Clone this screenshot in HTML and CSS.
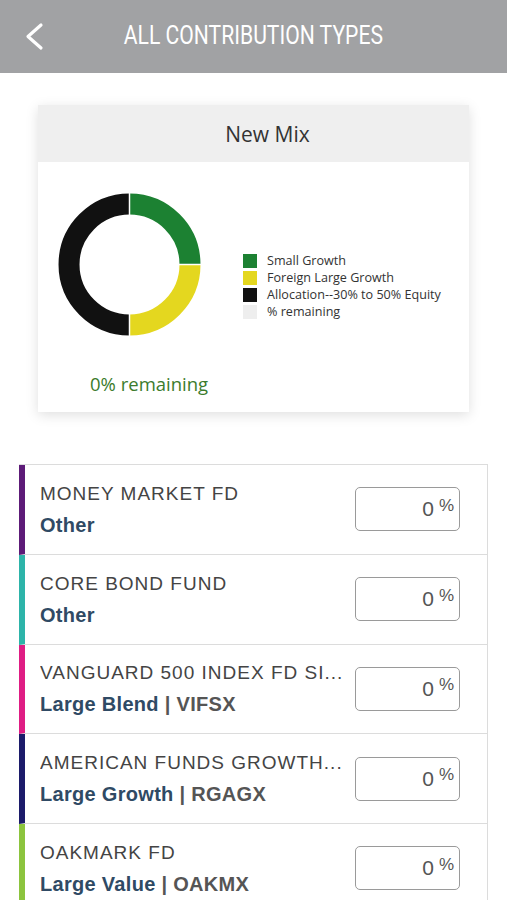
FILE: index.html
```html
<!DOCTYPE html>
<html lang="en">
<head>
    <meta charset="UTF-8">
    <meta name="viewport" content="width=device-width, initial-scale=1.0">
    <title>All Contribution Types</title>
    <link rel="stylesheet" href="styles.css">
</head>
<body>
    <header class="topbar">
        <div class="back">
            <svg width="20" height="30" viewBox="0 0 20 30">
                <polyline points="16,3 3,14.5 16,26" fill="none" stroke="#fff" stroke-width="3.2" stroke-linecap="round" stroke-linejoin="round"/>
            </svg>
        </div>
        <h1 class="title"><span>ALL CONTRIBUTION TYPES</span></h1>
        <div></div>
    </header>

    <section class="mix-card">
        <div class="mix-head">New Mix</div>
        <div class="mix-body">
            <div class="chart-row">
                <svg class="donut" width="143" height="143" viewBox="0 0 143 143">
                    <path d="M71.5 11 A60.5 60.5 0 0 1 132 71.5" fill="none" stroke="#1c8132" stroke-width="21"/>
                    <path d="M132 71.5 A60.5 60.5 0 0 1 71.5 132" fill="none" stroke="#e4d71f" stroke-width="21"/>
                    <path d="M71.5 132 A60.5 60.5 0 0 1 71.5 11" fill="none" stroke="#111111" stroke-width="21"/>
                    <line x1="71.5" y1="0" x2="71.5" y2="22" stroke="#fff" stroke-width="1.5"/>
                    <line x1="121" y1="71.5" x2="143" y2="71.5" stroke="#fff" stroke-width="1.5"/>
                    <line x1="71.5" y1="121" x2="71.5" y2="143" stroke="#fff" stroke-width="1.5"/>
                </svg>
                <ul class="legend">
                    <li><span class="swatch green"></span>Small Growth</li>
                    <li><span class="swatch yellow"></span>Foreign Large Growth</li>
                    <li><span class="swatch black"></span>Allocation--30% to 50% Equity</li>
                    <li><span class="swatch empty"></span>% remaining</li>
                </ul>
            </div>
            <div class="remaining">0% remaining</div>
        </div>
    </section>

    <div class="fund-list">
        <div class="fund purple">
            <div class="fund-info">
                <div class="fund-name">MONEY MARKET FD</div>
                <div class="fund-type">Other</div>
            </div>
            <div class="pct"><span class="num">0</span><span class="sign">%</span></div>
        </div>
        <div class="fund teal">
            <div class="fund-info">
                <div class="fund-name">CORE BOND FUND</div>
                <div class="fund-type">Other</div>
            </div>
            <div class="pct"><span class="num">0</span><span class="sign">%</span></div>
        </div>
        <div class="fund pink">
            <div class="fund-info">
                <div class="fund-name">VANGUARD 500 INDEX FD SI...</div>
                <div class="fund-type">Large Blend <span class="ticker">| VIFSX</span></div>
            </div>
            <div class="pct"><span class="num">0</span><span class="sign">%</span></div>
        </div>
        <div class="fund navy">
            <div class="fund-info">
                <div class="fund-name">AMERICAN FUNDS GROWTH...</div>
                <div class="fund-type">Large Growth <span class="ticker">| RGAGX</span></div>
            </div>
            <div class="pct"><span class="num">0</span><span class="sign">%</span></div>
        </div>
        <div class="fund lime">
            <div class="fund-info">
                <div class="fund-name">OAKMARK FD</div>
                <div class="fund-type">Large Value <span class="ticker">| OAKMX</span></div>
            </div>
            <div class="pct"><span class="num">0</span><span class="sign">%</span></div>
        </div>
    </div>
</body>
</html>
```

FILE: styles.css
```css
* {
    margin: 0;
    padding: 0;
    box-sizing: border-box;
}
body {
    width: 507px;
    background: #fff;
    font-family: "Liberation Sans", Arial, sans-serif;
    overflow: hidden;
}

.topbar {
    height: 73px;
    background: #a1a2a4;
    display: grid;
    grid-template-columns: 1fr auto 1fr;
    align-items: center;
}
.back {
    padding-left: 25px;
    display: flex;
    align-items: center;
}
.title {
    color: #fff;
    font-family: Roboto, sans-serif;
    font-weight: 400;
    font-size: 25px;
    margin-top: -2px;
}
.title span {
    display: inline-block;
    transform: scaleX(0.845);
}

.mix-card {
    margin: 32px 38px 0;
    background: #fff;
    box-shadow: 0 3px 12px rgba(0, 0, 0, 0.13);
}
.mix-head {
    height: 57px;
    background: #efefef;
    display: flex;
    align-items: center;
    justify-content: center;
    padding-left: 28px;
    font-family: "Open Sans", sans-serif;
    font-size: 21px;
    color: #333;
}
.mix-body {
    padding: 31px 0 16px 20px;
}
.chart-row {
    display: flex;
    align-items: center;
}
.legend {
    list-style: none;
    margin-left: 42px;
    margin-top: 43px;
    font-family: "Open Sans", sans-serif;
    font-size: 12.6px;
    color: #333;
}
.legend li {
    display: flex;
    align-items: center;
    height: 17px;
}
.swatch {
    width: 14px;
    height: 14px;
    margin-right: 10px;
}
.swatch.green { background: #1c8132; }
.swatch.yellow { background: #e4d71f; }
.swatch.black { background: #111; }
.swatch.empty { background: #eeeeee; }
.remaining {
    margin-top: 35px;
    padding-left: 32px;
    font-family: "Open Sans", sans-serif;
    font-size: 18.5px;
    color: #3b7b2c;
}

.fund-list {
    margin: 52px 19px 0;
    border-top: 1px solid #dcdcdc;
    border-right: 1px solid #dcdcdc;
}
.fund {
    height: 89.75px;
    border-left: 6px solid #ccc;
    border-bottom: 1px solid #dcdcdc;
    display: flex;
    align-items: center;
    padding: 0 27px 0 15px;
}
.fund.purple { border-left-color: #5d1b78; }
.fund.teal { border-left-color: #2db4a9; }
.fund.pink { border-left-color: #df1d84; }
.fund.navy { border-left-color: #1c1b6a; }
.fund.lime { border-left-color: #8cc43e; }
.fund-info {
    flex: 1;
    min-width: 0;
    margin-right: 6px;
}
.fund-name {
    font-size: 19px;
    letter-spacing: 1px;
    color: #444;
    white-space: nowrap;
    overflow: hidden;
    line-height: 24px;
}
.fund-type {
    margin-top: 7px;
    font-size: 20px;
    font-weight: 700;
    letter-spacing: 0.3px;
    color: #2f4a64;
    line-height: 24px;
}
.ticker {
    color: #555;
}
.pct {
    width: 105px;
    height: 44px;
    flex-shrink: 0;
    border: 1px solid #9a9a9a;
    border-radius: 5px;
    display: flex;
    align-items: center;
    justify-content: flex-end;
    padding-right: 5px;
    color: #555;
}
.pct .num {
    font-size: 21px;
    margin-right: 5px;
}
.pct .sign {
    font-size: 17px;
    margin-bottom: 7px;
}
```
